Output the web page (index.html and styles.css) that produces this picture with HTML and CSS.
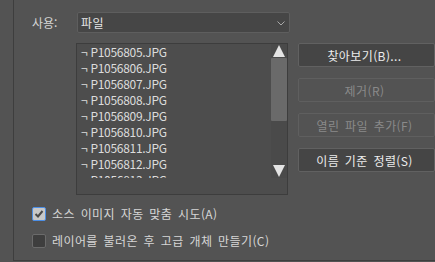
FILE: index.html
```html
<!DOCTYPE html>
<html lang="ko">
<head>
<meta charset="utf-8">
<link rel="stylesheet" href="styles.css">
</head>
<body>
<div class="panel">
  <div class="row-use">
    <span class="lbl">사용:</span>
    <div class="select">
      <span class="sel-text">파일</span>
      <svg class="chev" width="8" height="5" viewBox="0 0 8 5"><polyline points="0.5,0.5 4,4 7.5,0.5" fill="none" stroke="#a8a8a8" stroke-width="1"/></svg>
    </div>
  </div>
  <div class="main">
    <div class="list">
      <div class="list-body">
        <ul class="items">
          <li>¬ P1056805.JPG</li>
          <li>¬ P1056806.JPG</li>
          <li>¬ P1056807.JPG</li>
          <li>¬ P1056808.JPG</li>
          <li>¬ P1056809.JPG</li>
          <li>¬ P1056810.JPG</li>
          <li>¬ P1056811.JPG</li>
          <li>¬ P1056812.JPG</li>
          <li>¬ P1056813.JPG</li>
        </ul>
        <div class="vscroll">
          <svg class="arrow" width="16" height="14" viewBox="0 0 16 14"><polygon points="8,1 14,13 2,13" fill="#e4e4e4"/></svg>
          <div class="track"><div class="thumb"></div></div>
          <svg class="arrow" width="16" height="14" viewBox="0 0 16 14"><polygon points="2,1 14,1 8,13" fill="#e4e4e4"/></svg>
        </div>
      </div>
      <div class="hbar"></div>
    </div>
    <div class="buttons">
      <div class="btn">찾아보기(B)...</div>
      <div class="btn disabled">제거(R)</div>
      <div class="btn disabled">열린 파일 추가(F)</div>
      <div class="btn">이름 기준 정렬(S)</div>
    </div>
  </div>
  <div class="checks">
    <label class="chk-row">
      <span class="box checked"><svg width="12" height="12" viewBox="0 0 12 12"><polyline points="2.5,6 5,8.5 9.5,3" fill="none" stroke="#4a4a4a" stroke-width="2"/></svg></span>
      <span class="ktext">소스 이미지 자동 맞춤 시도(A)</span>
    </label>
    <label class="chk-row">
      <span class="box"></span>
      <span class="ktext">레이어를 불러온 후 고급 개체 만들기(C)</span>
    </label>
  </div>
</div>
</body>
</html>
```

FILE: styles.css
```css
html, body {
  margin: 0;
  padding: 0;
  background: #535353;
  overflow: hidden;
}
body {
  width: 435px;
  height: 262px;
  font-family: "Noto Sans CJK KR", "Noto Sans", sans-serif;
  font-size: 12px;
  color: #d6d6d6;
}
.panel {
  margin-left: 13px;
  border-left: 1px solid #3e3e3e;
  border-bottom: 1px solid #3e3e3e;
  height: 261px;
  box-sizing: border-box;
  padding: 12px 0 0 18px;
}
.row-use {
  display: flex;
  align-items: center;
  height: 21px;
}
.lbl {
  width: 45px;
  line-height: 21px;
}
.select {
  width: 213px;
  height: 21px;
  box-sizing: border-box;
  border: 1px solid #5e5e5e;
  border-radius: 2px;
  background: #464646;
  display: flex;
  align-items: center;
  justify-content: space-between;
  padding: 0 4px 0 3px;
  color: #e6e6e6;
  letter-spacing: 0.4px;
}
.chev {
  display: block;
  margin-top: 1px;
}
.main {
  display: flex;
  margin-top: 10px;
  margin-left: 44px;
  gap: 10px;
}
.list {
  width: 214px;
  height: 152px;
  box-sizing: border-box;
  border: 1px solid #3d3d3d;
  background: #4d4d4d;
  display: flex;
  flex-direction: column;
}
.list-body {
  display: flex;
  height: 134px;
  overflow: hidden;
}
.items {
  list-style: none;
  margin: 0;
  padding: 0 0 0 4px;
  flex: 1;
  overflow: hidden;
  color: #dcdcdc;
  letter-spacing: -0.3px;
}
.items li {
  height: 16px;
  line-height: 16px;
  white-space: nowrap;
}
.vscroll {
  width: 16px;
  display: flex;
  flex-direction: column;
  background: #4a4a4a;
}
.arrow {
  display: block;
  flex: none;
}
.track {
  flex: 1;
}
.thumb {
  height: 63px;
  background: #6a6a6a;
  border-radius: 1px;
}
.hbar {
  flex: 1;
}
.buttons {
  display: flex;
  flex-direction: column;
  gap: 11px;
}
.btn {
  width: 137px;
  height: 24px;
  box-sizing: border-box;
  border: 1px solid #616161;
  border-radius: 2px;
  background: #454545;
  color: #ececec;
  display: flex;
  align-items: center;
  justify-content: center;
  padding-right: 4px;
  letter-spacing: 0.4px;
  word-spacing: 2px;
  white-space: nowrap;
}
.btn.disabled {
  background: #535353;
  border-color: #5f5f5f;
  color: #8a8a8a;
}
.checks {
  margin-top: 5px;
  display: flex;
  flex-direction: column;
}
.chk-row {
  display: flex;
  align-items: center;
  height: 27px;
  gap: 6px;
}
.ktext {
  letter-spacing: 0.4px;
  word-spacing: 2px;
  white-space: nowrap;
}
.box {
  width: 14px;
  height: 14px;
  box-sizing: border-box;
  border: 1px solid #6b6b6b;
  border-radius: 2px;
  background: #3e3e3e;
  display: flex;
  align-items: center;
  justify-content: center;
}
.box.checked {
  background: #c8c8c8;
  border-color: #4b8ee6;
}
.box svg {
  display: block;
}
```
